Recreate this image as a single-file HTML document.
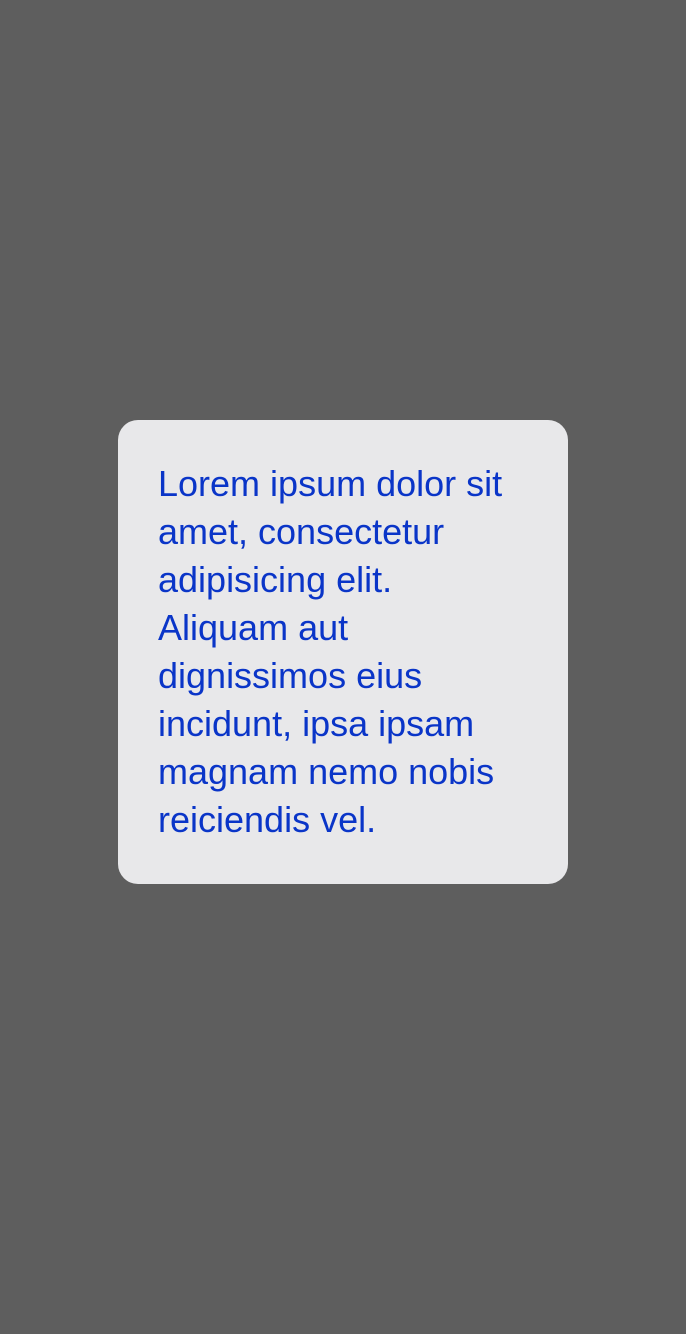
<!DOCTYPE html>
<html><head><meta charset="utf-8"><style>
html,body{margin:0;padding:0;width:686px;height:1334px;background:#5e5e5e;overflow:hidden}
.card{position:absolute;left:118px;top:420px;width:370px;padding:40px;background:#e8e8ea;border-radius:20px;
font-family:"Liberation Sans",sans-serif;font-size:36px;line-height:48px;color:#0a35c8}
</style></head><body>
<div class="card">Lorem ipsum dolor sit amet, consectetur adipisicing elit. Aliquam aut dignissimos eius incidunt, ipsa ipsam magnam nemo nobis reiciendis vel.</div>
</body></html>
